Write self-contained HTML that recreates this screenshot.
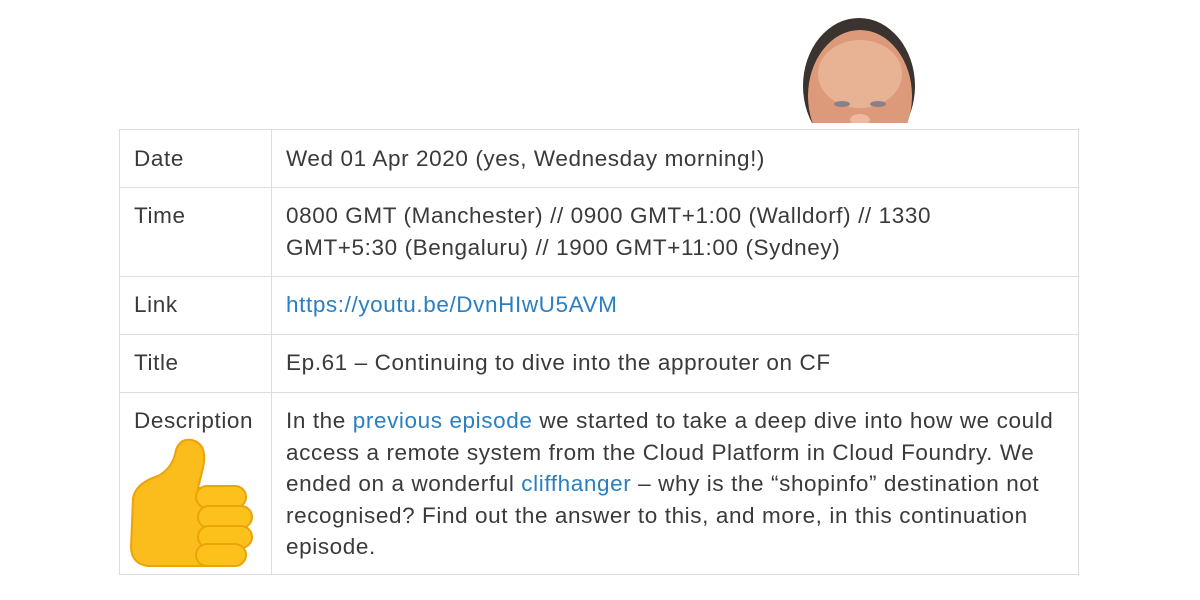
<!DOCTYPE html>
<html><head><meta charset="utf-8"><style>
body{margin:0;width:1200px;height:600px;background:#fff;position:relative;overflow:hidden;font-family:"Liberation Sans",sans-serif;color:#3a3a3a;font-size:22.5px;letter-spacing:0.6px}
.t{position:absolute;left:119px;top:129px;width:960px;height:446px;border:1px solid #ddd;box-sizing:border-box}
.h{position:absolute;left:0;width:958px;height:1px;background:#ddd}
.v{position:absolute;left:151px;top:0;width:1px;height:444px;background:#ddd}
.c{position:absolute;line-height:31.5px;white-space:nowrap}
a{color:#2a7fc0;text-decoration:none}
</style></head><body>
<svg style="position:absolute;left:800px;top:14px" width="120" height="110" viewBox="0 0 120 110">
<defs><clipPath id="cp"><rect x="0" y="0" width="120" height="109"/></clipPath></defs>
<g clip-path="url(#cp)">
<ellipse cx="59" cy="72" rx="56" ry="68" fill="#3a3330"/>
<ellipse cx="60" cy="82" rx="52" ry="66" fill="#dc9a7a"/>
<ellipse cx="60" cy="60" rx="42" ry="34" fill="#e8b394"/>
<ellipse cx="42" cy="90" rx="8" ry="3" fill="#8a8088"/>
<ellipse cx="78" cy="90" rx="8" ry="3" fill="#8a8088"/>
<ellipse cx="60" cy="106" rx="10" ry="6" fill="#f0b8a0"/>
</g></svg>
<div class="t">
<div class="v"></div>
<div class="h" style="top:57px"></div>
<div class="h" style="top:146px"></div>
<div class="h" style="top:204px"></div>
<div class="h" style="top:262px"></div>
</div>
<div class="c" style="left:134px;top:143px">Date</div>
<div class="c" style="left:286px;top:143px">Wed 01 Apr 2020 (yes, Wednesday morning!)</div>
<div class="c" style="left:134px;top:200px">Time</div>
<div class="c" style="left:286px;top:200px">0800 GMT (Manchester) // 0900 GMT+1:00 (Walldorf) // 1330<br>GMT+5:30 (Bengaluru) // 1900 GMT+11:00 (Sydney)</div>
<div class="c" style="left:134px;top:289px">Link</div>
<div class="c" style="left:286px;top:289px"><a>https://youtu.be/DvnHIwU5AVM</a></div>
<div class="c" style="left:134px;top:347px">Title</div>
<div class="c" style="left:286px;top:347px">Ep.61 – Continuing to dive into the approuter on CF</div>
<div class="c" style="left:134px;top:405px">Description</div>
<div class="c" style="left:286px;top:405px">In the <a>previous episode</a> we started to take a deep dive into how we could<br>access a remote system from the Cloud Platform in Cloud Foundry. We<br>ended on a wonderful <a>cliffhanger</a> – why is the “shopinfo” destination not<br>recognised? Find out the answer to this, and more, in this continuation<br>episode.</div>
<svg style="position:absolute;left:128px;top:438px" width="128" height="132" viewBox="0 0 128 132">
<path d="M5 60 Q8 45 30 38 Q45 30 48 12 Q52 0 64 2 Q80 6 75 30 Q72 42 70 50 L105 50 Q115 60 105 128 L20 128 Q4 126 3 110 Z" fill="#fbbd1c" stroke="#eca30a" stroke-width="2"/>
<rect x="68" y="48" width="50" height="22" rx="11" fill="#fcc21b" stroke="#eca30a" stroke-width="2"/>
<rect x="70" y="68" width="54" height="22" rx="11" fill="#fcc21b" stroke="#eca30a" stroke-width="2"/>
<rect x="70" y="88" width="54" height="22" rx="11" fill="#fcc21b" stroke="#eca30a" stroke-width="2"/>
<rect x="68" y="106" width="50" height="22" rx="11" fill="#fcc21b" stroke="#eca30a" stroke-width="2"/>
</svg>
</body></html>
